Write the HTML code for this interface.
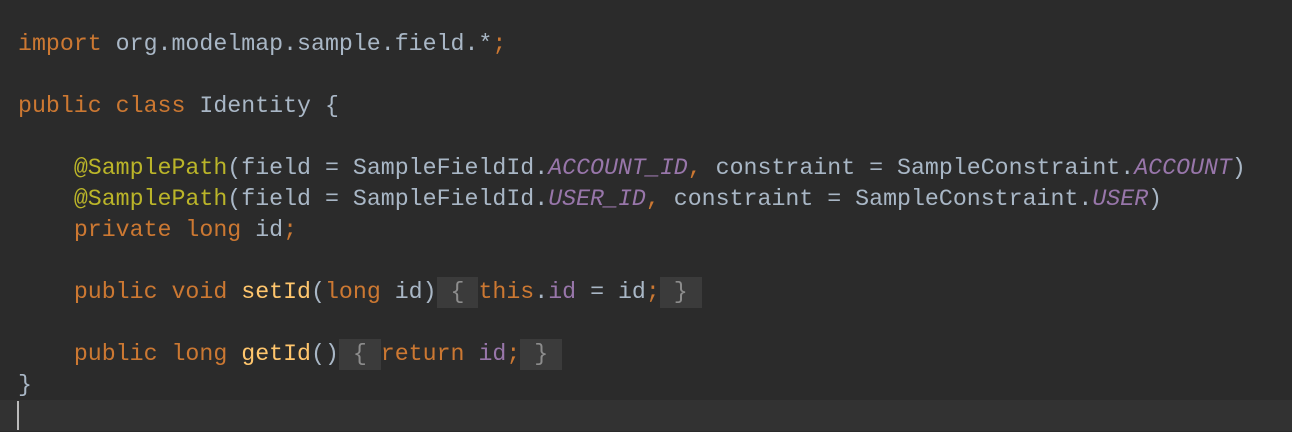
<!DOCTYPE html>
<html><head><style>
html,body{margin:0;padding:0;background:#2b2b2b;width:1292px;height:432px;overflow:hidden}
.code{position:absolute;left:18px;top:29px;font-family:"Liberation Mono",monospace;font-size:23.25px;line-height:31px;color:#a9b7c6;white-space:pre}
.k{color:#cc7832}.a{color:#bbb529}.f{color:#9876aa;font-style:italic}.p{color:#9876aa}.m{color:#ffc66d}
.b{background:#3b3b3b;color:#8c8c8c;display:inline-block;height:31px;vertical-align:top}
.cl{position:absolute;left:0;top:400px;width:1292px;height:31px;background:#323232}
.cur{position:absolute;left:17px;top:401px;width:2px;height:29px;background:#bbbbbb}
</style></head><body>
<div class="cl"></div><div class="cur"></div>
<div class="code"><span class="k">import</span> org.modelmap.sample.field.*<span class="k">;</span>

<span class="k">public class</span> Identity {

    <span class="a">@SamplePath</span>(field = SampleFieldId.<span class="f">ACCOUNT_ID</span><span class="k">,</span> constraint = SampleConstraint.<span class="f">ACCOUNT</span>)
    <span class="a">@SamplePath</span>(field = SampleFieldId.<span class="f">USER_ID</span><span class="k">,</span> constraint = SampleConstraint.<span class="f">USER</span>)
    <span class="k">private long</span> id<span class="k">;</span>

    <span class="k">public void</span> <span class="m">setId</span>(<span class="k">long</span> id)<span class="b"> { </span><span class="k">this</span>.<span class="p">id</span> = id<span class="k">;</span><span class="b"> } </span>

    <span class="k">public long</span> <span class="m">getId</span>()<span class="b"> { </span><span class="k">return</span> <span class="p">id</span><span class="k">;</span><span class="b"> } </span>
}</div>
</body></html>
